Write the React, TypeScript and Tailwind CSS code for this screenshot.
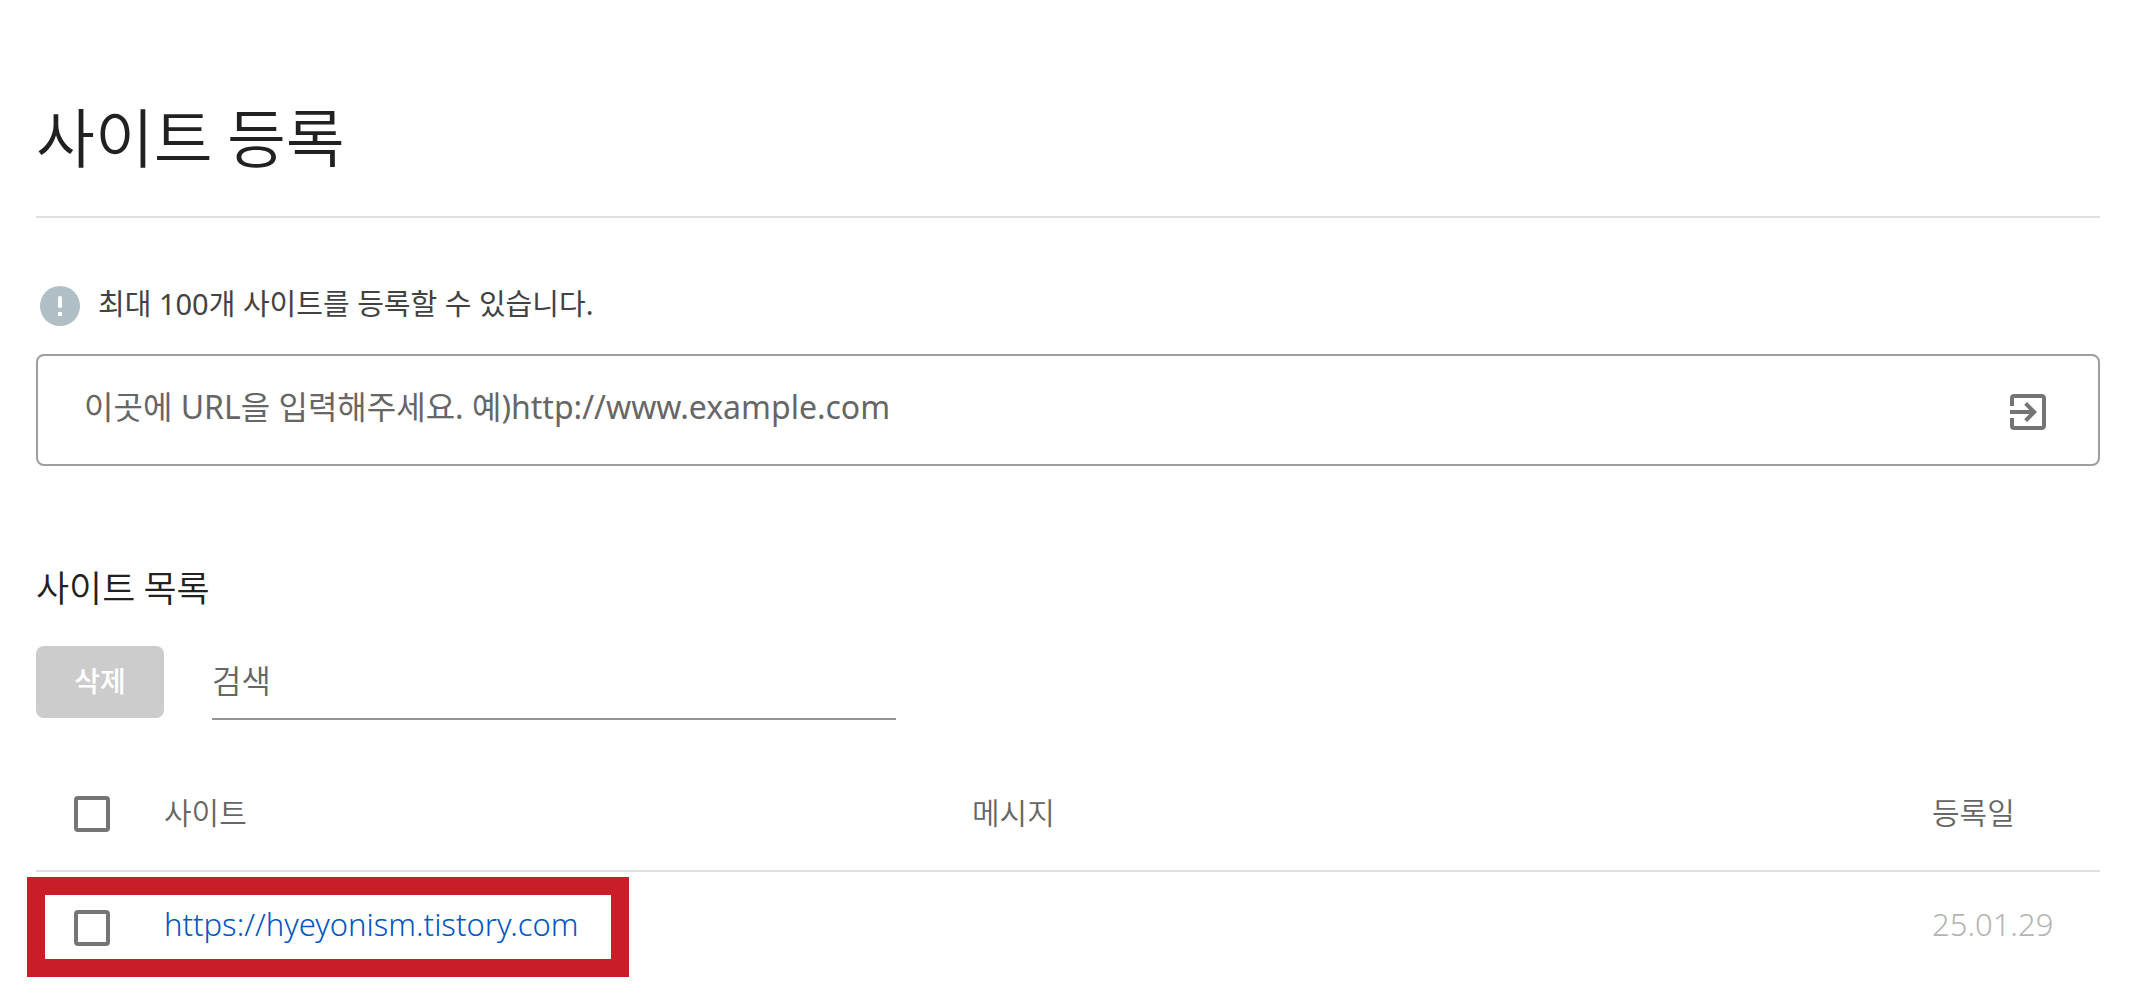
import { MdExitToApp } from 'react-icons/md'

const sites = [{ url: 'https://hyeyonism.tistory.com', message: '', date: '25.01.29' }]

function Checkbox({ label }: { label: string }) {
  return (
    <input
      type="checkbox"
      aria-label={label}
      className="block size-9 appearance-none rounded-sm border-4 border-[#757575] bg-white checked:bg-[#757575]"
    />
  )
}

function NoticeIcon() {
  return (
    <svg viewBox="0 0 24 24" className="size-12 shrink-0" aria-hidden="true">
      <circle cx="12" cy="12" r="10" fill="#b0bec5" />
      <rect x="11" y="7" width="2" height="6" rx="0.9" fill="#fff" />
      <rect x="11" y="15" width="2" height="2" fill="#fff" />
    </svg>
  )
}

function SiteForm() {
  return (
    <section className="pt-16">
      <div className="flex h-12 items-center gap-[14px]">
        <NoticeIcon />
        <p className="pb-1 text-[29px] leading-10 text-[#424242]">최대 100개 사이트를 등록할 수 있습니다.</p>
      </div>
      <form
        className="mt-6 flex h-28 items-center rounded-lg border-2 border-[#9e9e9e] px-[46px]"
        onSubmit={(e) => e.preventDefault()}
      >
        <input
          type="url"
          aria-label="사이트 URL"
          placeholder="이곳에 URL을 입력해주세요. 예)http://www.example.com"
          className="h-full min-w-0 flex-1 pb-2 text-[32px] outline-none placeholder:text-[#666]"
        />
        <button type="submit" aria-label="등록" className="shrink-0 pt-1 text-[#757575]">
          <MdExitToApp className="size-12" />
        </button>
      </form>
    </section>
  )
}

function SiteList() {
  return (
    <section className="pt-24">
      <h2 className="font-['Noto_Sans_CJK_KR',sans-serif] text-4xl leading-12 font-[350] text-[#212121]">
        사이트 목록
      </h2>
      <div className="mt-9 flex items-start gap-12">
        <button
          type="button"
          disabled
          className="h-18 w-32 rounded-lg bg-[#cccccc] pb-0.5 text-[28px] font-medium text-white"
        >
          삭제
        </button>
        <input
          type="search"
          aria-label="검색"
          placeholder="검색"
          className="h-[74px] w-[684px] border-b-2 border-[#949494] pb-1 text-[32px] font-[350] outline-none placeholder:text-[#666]"
        />
      </div>
      <table className="mt-9 w-full table-fixed text-left text-[30px] leading-10 font-[350]">
        <colgroup>
          <col className="w-32" />
          <col className="w-[808px]" />
          <col />
          <col className="w-42" />
        </colgroup>
        <thead>
          <tr className="h-[115px] border-b-2 border-[#e0e0e0] text-[#666]">
            <th className="pt-0.5 pl-[38px]">
              <Checkbox label="전체 선택" />
            </th>
            <th className="font-[350]">사이트</th>
            <th className="font-[350]">메시지</th>
            <th className="font-[350]">등록일</th>
          </tr>
        </thead>
        <tbody>
          {sites.map((site) => (
            <tr key={site.url} className="relative h-28 text-[31px] font-light">
              <td className="pl-[38px]">
                <Checkbox label={site.url} />
                <div className="pointer-events-none absolute top-[6px] -left-[9px] h-[100px] w-[602px] border-18 border-[#ca1d28]" />
              </td>
              <td className="pb-2">
                <a href={site.url} className="text-[#0056c0]">
                  {site.url}
                </a>
              </td>
              <td>{site.message}</td>
              <td className="pb-2 text-[#b4b4b4]">{site.date}</td>
            </tr>
          ))}
        </tbody>
      </table>
    </section>
  )
}

export default function App() {
  return (
    <main className="min-h-screen bg-white pt-24 pr-[34px] pl-9 font-['Noto_Sans','Noto_Sans_CJK_KR',sans-serif]">
      <h1 className="border-b-2 border-[#e0e0e0] pb-11 font-['Noto_Sans_CJK_KR',sans-serif] text-[64px] leading-19 font-[350] text-[#212121]">
        사이트 등록
      </h1>
      <SiteForm />
      <SiteList />
    </main>
  )
}
